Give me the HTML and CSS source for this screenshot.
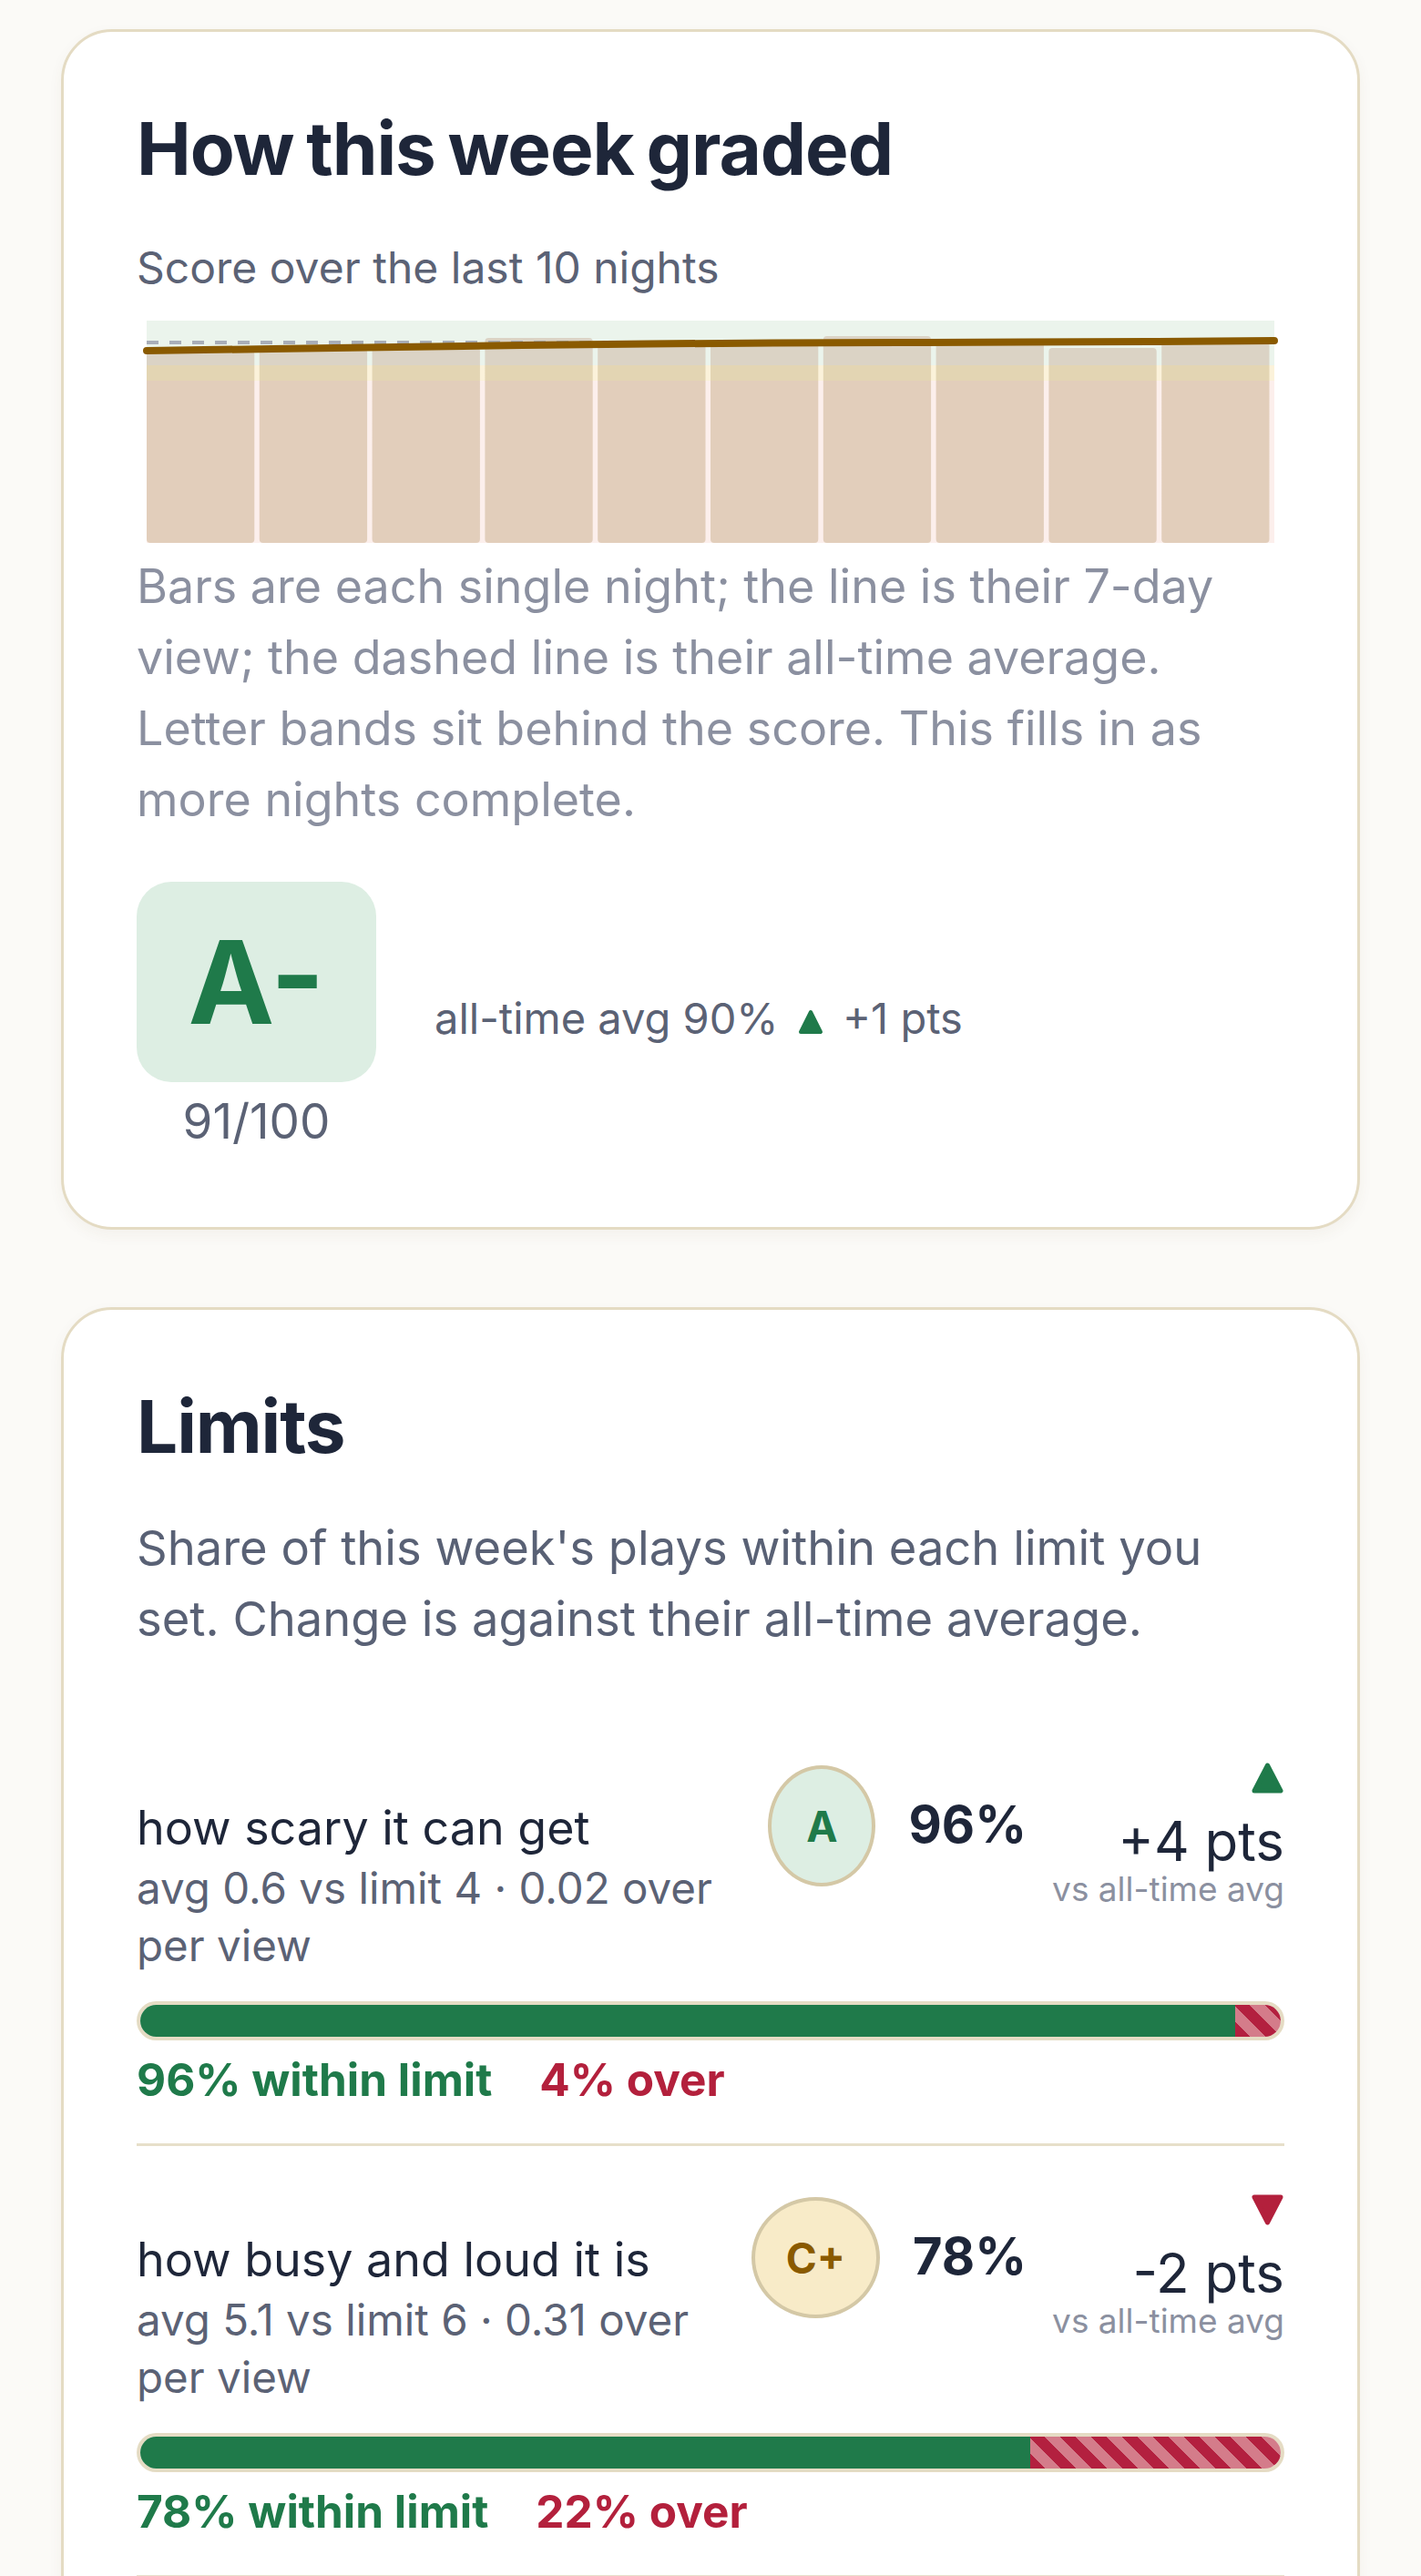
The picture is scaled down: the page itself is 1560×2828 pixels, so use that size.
FILE: index.html
```html
<!DOCTYPE html>
<html lang="en">
<head>
  <meta charset="UTF-8">
  <meta name="viewport" content="width=device-width, initial-scale=1.0">
  <title>Weekly Report</title>
  <link rel="stylesheet" href="styles.css">
</head>
<body>
  <main class="report">

    <section class="card">
      <h1>How this week graded</h1>
      <p class="chart-label">Score over the last 10 nights</p>

      <svg class="score-chart" viewBox="0 0 1260 244" width="1260" height="244">
        <defs>
          <!-- bars pick up the tint of the band they sit in -->
          <linearGradient id="barFill" gradientUnits="userSpaceOnUse" x1="0" y1="0" x2="0" y2="244">
            <stop offset="0.2008" stop-color="#dbd3c5"/>
            <stop offset="0.2008" stop-color="#e3d5b3"/>
            <stop offset="0.2705" stop-color="#e3d5b3"/>
            <stop offset="0.2705" stop-color="#e2cebb"/>
          </linearGradient>
        </defs>

        <!-- letter bands -->
        <rect x="11" y="0" width="1238" height="49" fill="#ebf4ec"/>
        <rect x="11" y="49" width="1238" height="17" fill="#fbf2da"/>
        <rect x="11" y="66" width="1238" height="178" fill="#fcefec"/>

        <!-- one bar per night -->
        <rect x="11" y="33" width="118.3" height="211" rx="4" fill="url(#barFill)"/>
        <rect x="134.8" y="31" width="118.3" height="213" rx="4" fill="url(#barFill)"/>
        <rect x="258.6" y="29" width="118.3" height="215" rx="4" fill="url(#barFill)"/>
        <rect x="382.4" y="19" width="118.3" height="225" rx="4" fill="url(#barFill)"/>
        <rect x="506.2" y="25" width="118.3" height="219" rx="4" fill="url(#barFill)"/>
        <rect x="630" y="24.5" width="118.3" height="219.5" rx="4" fill="url(#barFill)"/>
        <rect x="753.8" y="17" width="118.3" height="227" rx="4" fill="url(#barFill)"/>
        <rect x="877.6" y="23" width="118.3" height="221" rx="4" fill="url(#barFill)"/>
        <rect x="1001.4" y="30" width="118.3" height="214" rx="4" fill="url(#barFill)"/>
        <rect x="1125.2" y="23" width="118.3" height="221" rx="4" fill="url(#barFill)"/>

        <!-- all-time average -->
        <line x1="11" y1="24" x2="1249" y2="24" stroke="#a9aeb8" stroke-width="4" stroke-dasharray="13 12"/>

        <!-- 7-day view -->
        <polyline fill="none" stroke="#8a5a00" stroke-width="8" stroke-linecap="round" stroke-linejoin="round"
          points="11,33 148.6,31 286.1,29 423.7,27 561.2,25.5 698.8,24.5 836.4,24 973.9,23.5 1111.4,23 1249,22"/>
      </svg>

      <p class="chart-note">Bars are each single night; the line is their 7-day view; the dashed line is their all-time average. Letter bands sit behind the score. This fills in as more nights complete.</p>

      <div class="grade-summary">
        <div class="grade-block">
          <div class="grade-box">A-</div>
          <div class="grade-score">91/100</div>
        </div>
        <p class="grade-trend">all-time avg 90%
          <svg class="tri-inline" viewBox="0 0 30 30" width="30" height="30"><path d="M15 4 L26 26 L4 26 Z" fill="#1f7a4a" stroke="#1f7a4a" stroke-width="4" stroke-linejoin="round"/></svg>
          +1 pts</p>
      </div>
    </section>

    <section class="card">
      <h1>Limits</h1>
      <p class="card-intro">Share of this week's plays within each limit you set. Change is against their all-time average.</p>

      <div class="limit-list">
        <div class="limit-item">
          <div class="limit-head">
            <div class="limit-text">
              <p class="limit-name">how scary it can get</p>
              <p class="limit-detail">avg 0.6 vs limit 4 · 0.02 over per view</p>
            </div>
            <span class="grade-pill grade-a">A</span>
            <span class="limit-pct">96%</span>
            <div class="limit-delta">
              <svg class="tri" viewBox="0 0 37 36" width="37" height="36"><path d="M18.5 4 L33 32 L4 32 Z" fill="#1f7a4a" stroke="#1f7a4a" stroke-width="5" stroke-linejoin="round"/></svg>
              <span class="delta-value">+4 pts</span>
              <span class="delta-label">vs all-time avg</span>
            </div>
          </div>
          <div class="limit-bar">
            <div class="bar-within" style="width: 96%"></div>
            <div class="bar-over"></div>
          </div>
          <div class="limit-legend">
            <span class="within">96% within limit</span>
            <span class="over">4% over</span>
          </div>
        </div>

        <div class="limit-item">
          <div class="limit-head">
            <div class="limit-text">
              <p class="limit-name">how busy and loud it is</p>
              <p class="limit-detail">avg 5.1 vs limit 6 · 0.31 over per view</p>
            </div>
            <span class="grade-pill grade-c">C+</span>
            <span class="limit-pct">78%</span>
            <div class="limit-delta">
              <svg class="tri" viewBox="0 0 37 36" width="37" height="36"><path d="M4 4 L33 4 L18.5 32 Z" fill="#b3203c" stroke="#b3203c" stroke-width="5" stroke-linejoin="round"/></svg>
              <span class="delta-value">-2 pts</span>
              <span class="delta-label">vs all-time avg</span>
            </div>
          </div>
          <div class="limit-bar">
            <div class="bar-within" style="width: 78%"></div>
            <div class="bar-over"></div>
          </div>
          <div class="limit-legend">
            <span class="within">78% within limit</span>
            <span class="over">22% over</span>
          </div>
        </div>
      </div>
    </section>

  </main>
</body>
</html>
```

FILE: styles.css
```css
* {
  margin: 0;
  padding: 0;
  box-sizing: border-box;
}

body {
  font-family: 'Inter', 'Noto Sans', sans-serif;
  background-color: #fbfaf7;
  color: #1e2639;
}

.report {
  display: flex;
  flex-direction: column;
  gap: 85px;
  padding: 32px 67px;
}

.card {
  background-color: #ffffff;
  border: 3px solid #e4dbc3;
  border-radius: 56px;
  padding: 80px;
  box-shadow: 0 6px 16px rgba(90, 70, 30, 0.05);
}

h1 {
  font-size: 80px;
  font-weight: 700;
  line-height: 96px;
  letter-spacing: -1.1px;
  word-spacing: -4px;
  color: #1e2639;
}

/* weekly score chart */
.chart-label {
  margin-top: 48px;
  font-size: 48px;
  line-height: 69px;
  color: #5b6275;
}

.score-chart {
  display: block;
  margin-top: 24px;
}

.chart-note {
  margin-top: 9px;
  font-size: 52px;
  line-height: 78px;
  color: #8b90a0;
}

.grade-summary {
  display: flex;
  align-items: center;
  gap: 64px;
  margin-top: 51px;
}

.grade-block {
  display: flex;
  flex-direction: column;
  align-items: center;
  width: 263px;
}

.grade-box {
  width: 263px;
  height: 220px;
  border-radius: 38px;
  background-color: #ddeee3;
  color: #1f7a4a;
  font-size: 127px;
  font-weight: 700;
  display: flex;
  align-items: center;
  justify-content: center;
}

.grade-score {
  margin-top: 7px;
  font-size: 53px;
  line-height: 72px;
  color: #5b6275;
}

.grade-trend {
  font-size: 47px;
  color: #5b6275;
}

.tri-inline {
  vertical-align: -2px;
  margin: 0 7px;
}

/* limits */
.card-intro {
  margin-top: 46px;
  font-size: 52.5px;
  line-height: 78px;
  color: #596175;
}

.limit-list {
  margin-top: 66px;
}

.limit-item {
  padding: 52px 0 40px;
  border-bottom: 3px solid #e7dfca;
}

.limit-head {
  display: flex;
  align-items: flex-start;
  gap: 36px;
}

.limit-text {
  flex: 1;
  padding-top: 40px;
}

.limit-name {
  font-size: 52px;
  line-height: 65px;
  color: #1e2639;
}

.limit-detail {
  margin-top: 2px;
  font-size: 47.5px;
  line-height: 63px;
  color: #5b6275;
}

.grade-pill {
  margin-top: 4px;
  height: 133px;
  min-width: 118px;
  padding: 0 34px;
  border: 4px solid #d4c8a6;
  border-radius: 50%;
  display: flex;
  align-items: center;
  justify-content: center;
  font-size: 46px;
  font-weight: 700;
}

.grade-pill.grade-a {
  background-color: #ddeee3;
  color: #1f7a4a;
}

.grade-pill.grade-c {
  background-color: #f8ebc8;
  color: #8a5a00;
}

.limit-pct {
  margin-top: 41px;
  font-size: 56px;
  font-weight: 700;
  line-height: 56px;
  color: #1e2639;
}

.limit-delta {
  display: flex;
  flex-direction: column;
  align-items: flex-end;
  margin-left: -8px;
}

.tri {
  display: block;
}

.delta-value {
  margin-top: 20px;
  font-size: 60px;
  line-height: 62px;
  color: #1e2639;
}

.delta-label {
  font-size: 37px;
  line-height: 44px;
  color: #8b90a0;
}

.limit-bar {
  display: flex;
  margin-top: 30px;
  height: 43px;
  border: 4px solid #e5dcc4;
  border-radius: 999px;
  overflow: hidden;
}

.bar-within {
  background-color: #1f7a4a;
}

.bar-over {
  flex: 1;
  background: repeating-linear-gradient(45deg, #b3203f 0 12px, #d47c8a 12px 24px);
}

.limit-legend {
  display: flex;
  gap: 52px;
  margin-top: 13px;
  font-size: 49.5px;
  font-weight: 700;
  line-height: 60px;
}

.limit-legend .within {
  color: #1f7a4a;
}

.limit-legend .over {
  color: #b3203c;
}
```
